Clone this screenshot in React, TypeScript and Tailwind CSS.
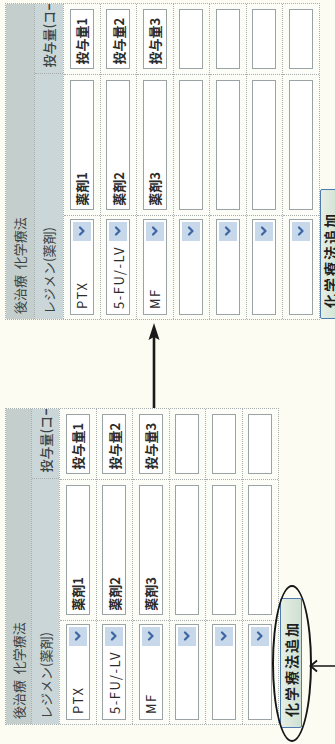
type Row = { regimen: string; drug: string; dose: string };

const leftRows: Row[] = [
  { regimen: 'PTX', drug: '薬剤1', dose: '投与量1' },
  { regimen: '5-FU/-LV', drug: '薬剤2', dose: '投与量2' },
  { regimen: 'MF', drug: '薬剤3', dose: '投与量3' },
  { regimen: '', drug: '', dose: '' },
  { regimen: '', drug: '', dose: '' },
  { regimen: '', drug: '', dose: '' },
];

const rightRows: Row[] = [...leftRows, { regimen: '', drug: '', dose: '' }];

function Chevron() {
  return (
    <svg width="10" height="8" viewBox="0 0 10 8" fill="none">
      <path d="M1.5 2 L5 5.5 L8.5 2" stroke="#3d66a3" strokeWidth="2.2" strokeLinecap="round" strokeLinejoin="round" />
    </svg>
  );
}

function RegimenTable({ rows, head1, head2 }: { rows: Row[]; head1: string; head2: string }) {
  return (
    <div className="w-[317px] border border-dotted border-[#a7adad] text-[13px] text-[#2b2b2b]">
      <div className={`${head1} flex items-center bg-[#c4cfcd] pl-[5px] text-[#3b4142]`}>後治療&nbsp;&nbsp;化学療法</div>
      <div className={`${head2} flex border-t border-dotted border-[#a7adad] bg-[#cad6d8] text-[#3b4142]`}>
        <div className="flex w-[247px] items-center pl-[5px]">レジメン(薬剤)</div>
        <div className="flex w-[70px] items-center overflow-hidden whitespace-nowrap border-l border-dotted border-[#a7adad] pl-[5px] font-medium">
          投与量(コース)
        </div>
      </div>
      {rows.map((r, i) => (
        <div key={i} className="flex h-[36.5px] border-t border-dotted border-[#a7adad] bg-[#fdfdf8]">
          <div className="flex w-[105px] items-center border-r border-dotted border-[#a7adad] pl-[4px] pr-[3px]">
            <div className="flex h-[24px] flex-1 items-center justify-between border border-[#9aa3a6] bg-white pl-[5px] pr-[2px]">
              <span className="tracking-[1.5px]">{r.regimen}</span>
              <span className="flex h-[18px] w-[19px] items-center justify-center bg-[#c6d8ea]">
                <Chevron />
              </span>
            </div>
          </div>
          <div className="flex w-[142px] items-center border-r border-dotted border-[#a7adad] px-[5px]">
            <div className="flex h-[24px] flex-1 items-center border border-[#9aa3a6] bg-white pl-[3px] font-bold">
              {r.drug}
            </div>
          </div>
          <div className="flex w-[70px] items-center px-[5px]">
            <div className="flex h-[24px] flex-1 items-center border border-[#9aa3a6] bg-white pl-[3px] font-bold">
              {r.dose}
            </div>
          </div>
        </div>
      ))}
    </div>
  );
}

function AddButton() {
  return (
    <div className="flex h-[22px] w-[130px] items-center rounded-[2px] border border-[#4f7bb3] bg-gradient-to-b from-[#e6efe4] to-[#cfe0d2] pl-[10px] text-[14px] font-bold tracking-[2px] text-[#1f1f1f]">
      化学療法追加
    </div>
  );
}

export default function App() {
  return (
    <div className="relative h-[744px] w-[335px] overflow-hidden bg-[#fcfcf3] font-['Noto_Sans_CJK_JP','Noto_Sans',sans-serif]">
      <div className="flex h-[335px] w-[744px] origin-top-left -rotate-90 translate-y-[744px] items-start pt-[5px]">
        <div className="relative ml-[19px] flex flex-col">
          <RegimenTable rows={leftRows} head1="h-[25px]" head2="h-[28px]" />
          <div className="ml-[-3px] mt-[1px]">
            <AddButton />
          </div>
          <div className="absolute left-[-17px] top-[267px] h-[40px] w-[157px] rounded-[50%] border-[2.5px] border-[#151515]" />
          <svg className="ml-[52px] mt-[6px]" width="14" height="30" viewBox="0 0 14 30" fill="none">
            <path d="M7 3 L7 30" stroke="#151515" strokeWidth="1.6" />
            <path d="M1.5 9 L7 2.5 L12.5 9" stroke="#151515" strokeWidth="1.8" fill="none" />
          </svg>
        </div>
        <svg className="mt-[142px] shrink-0" width="88" height="14" viewBox="0 0 88 14" fill="none">
          <path d="M0 7 L74 7" stroke="#1a1a1a" strokeWidth="2.6" />
          <path d="M68 1.5 L85 7 L68 12.5 L71 7 Z" fill="#1a1a1a" />
        </svg>
        <div className="flex shrink-0 flex-col">
          <RegimenTable rows={rightRows} head1="h-[28px]" head2="h-[29px]" />
          <div className="ml-[1px]">
            <AddButton />
          </div>
        </div>
      </div>
    </div>
  );
}
